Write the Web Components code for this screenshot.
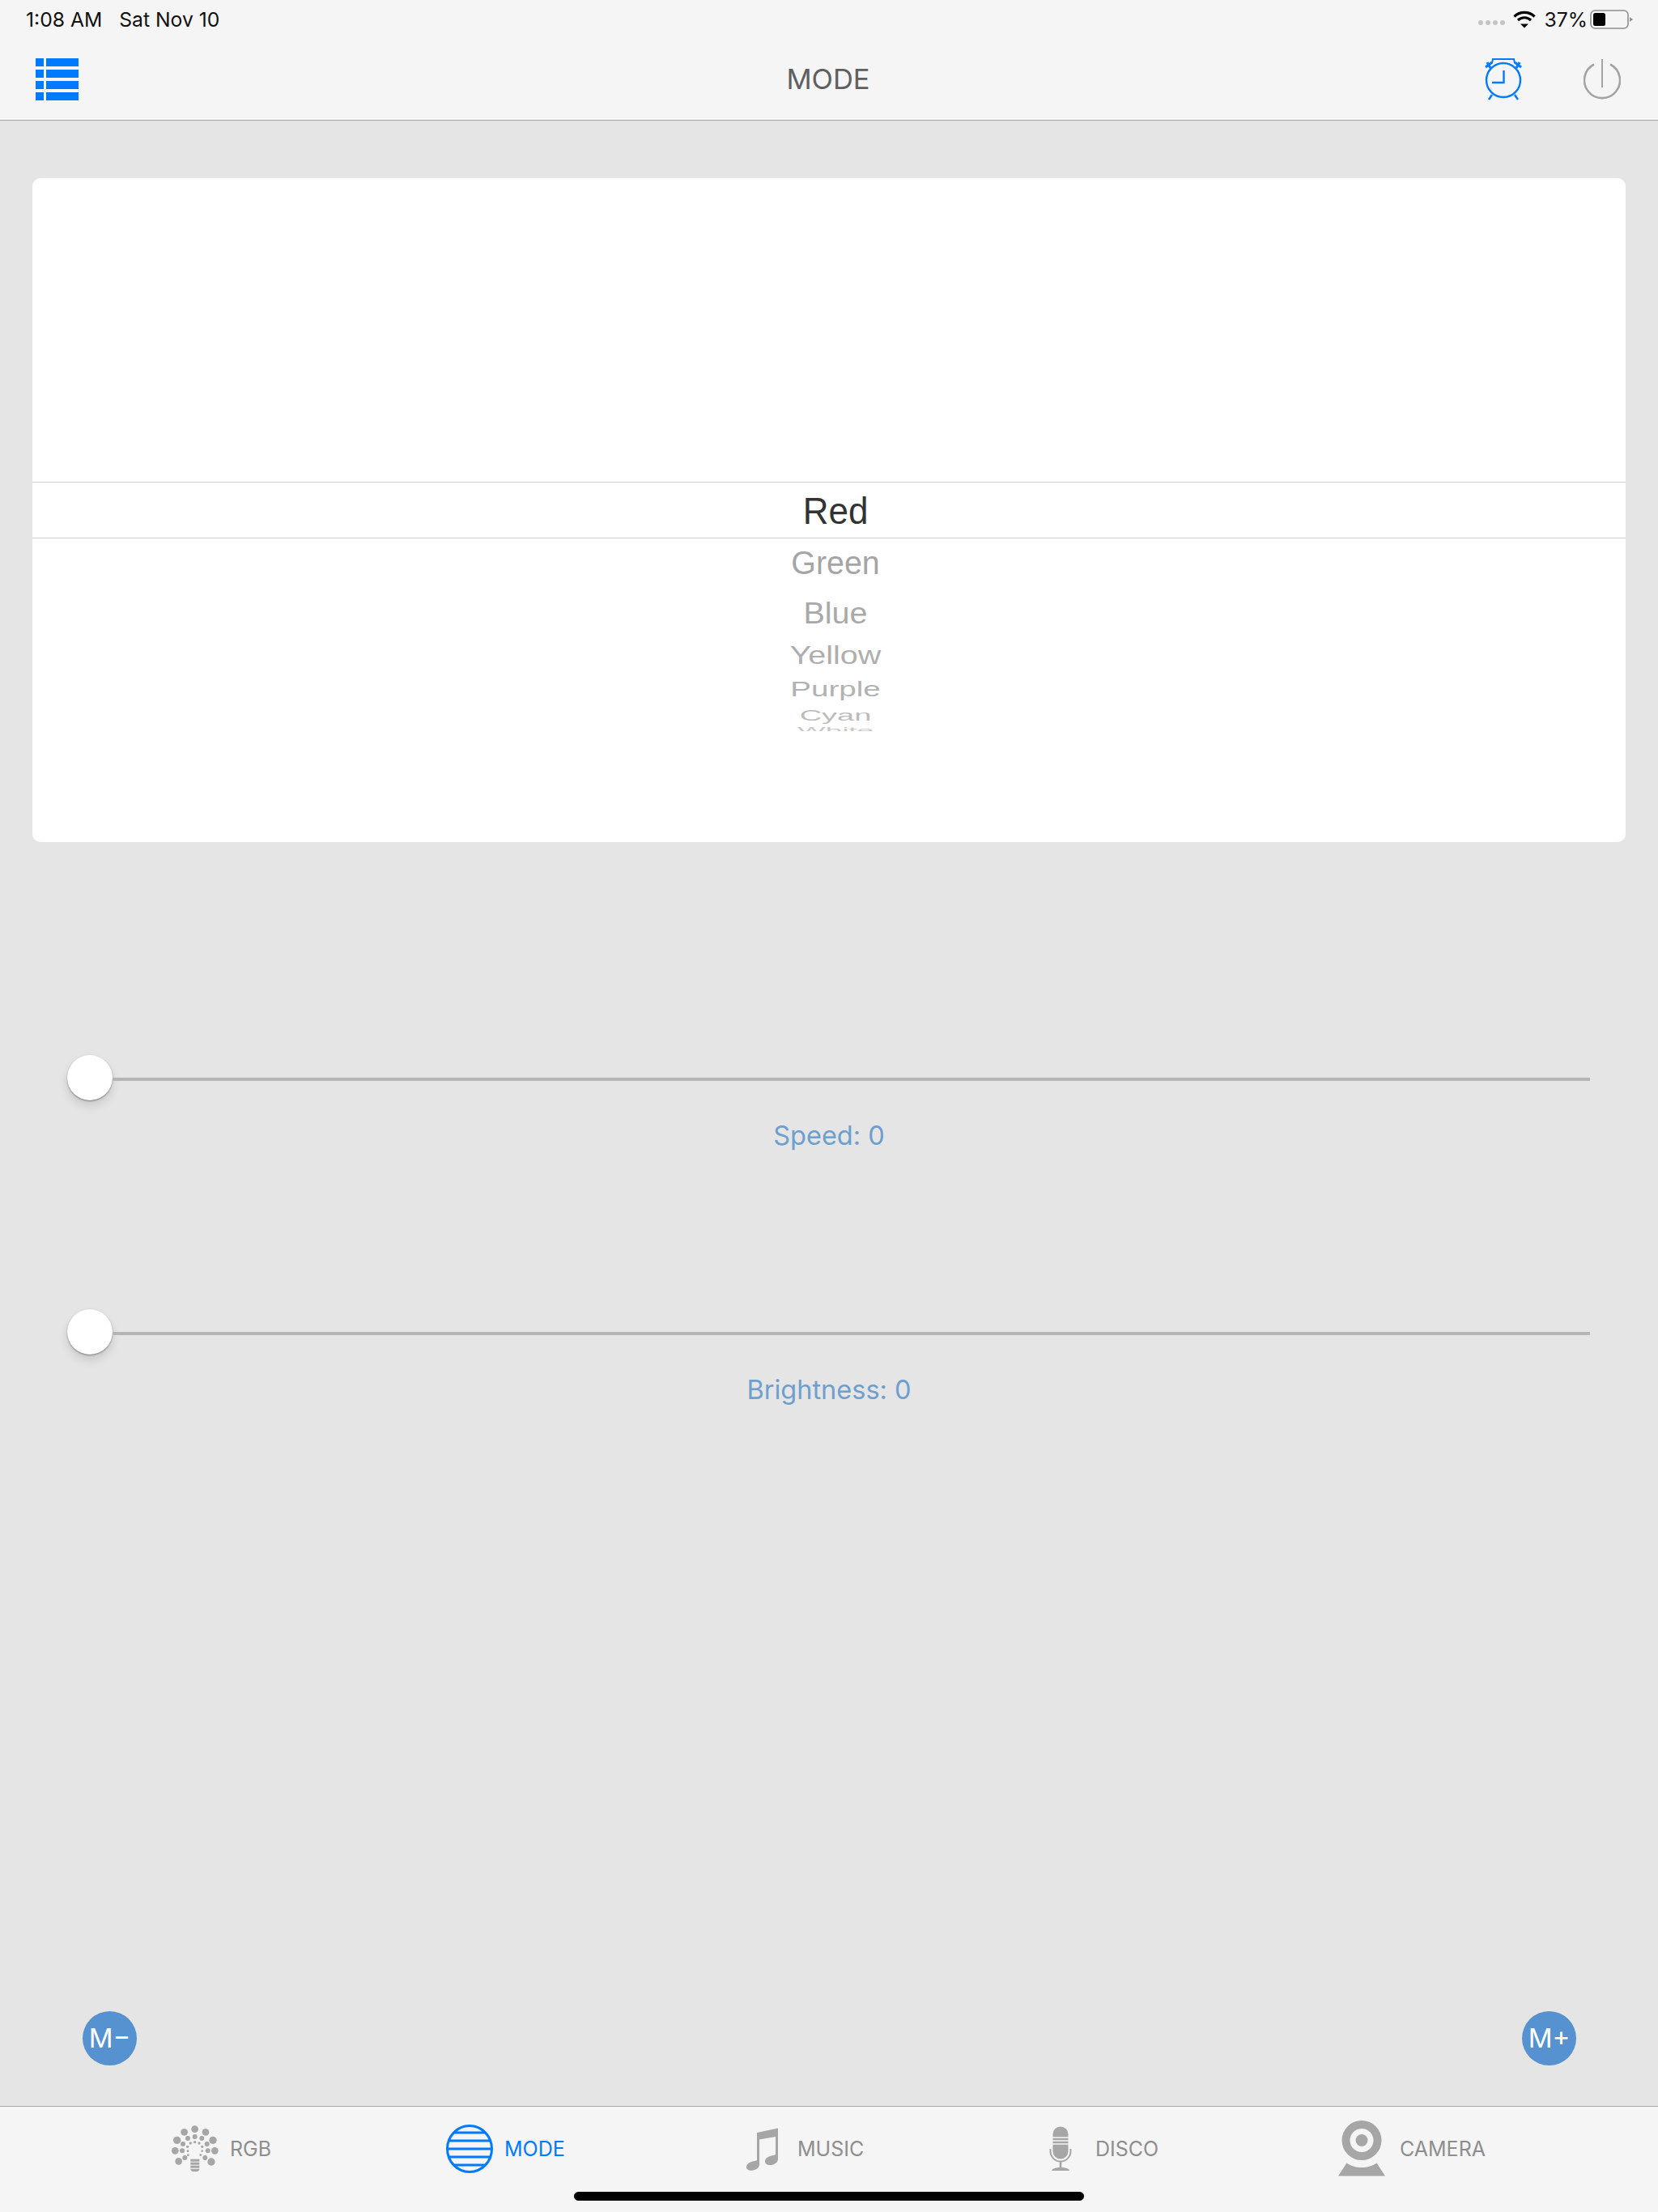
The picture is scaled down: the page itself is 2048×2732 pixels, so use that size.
<!DOCTYPE html>
<html>
<head>
<meta charset="utf-8">
<title>MODE</title>
<style>
  html, body { margin: 0; padding: 0; background: #e5e5e5; }
  body { font-family: "Inter", "Liberation Sans", sans-serif; }
</style>
</head>
<body>
<app-screen>
  <status-bar slot="top"></status-bar>
  <nav-bar slot="top" title="MODE"></nav-bar>

  <picker-wheel></picker-wheel>
  <value-slider label="Speed: 0" style="margin-top:263px"></value-slider>
  <value-slider label="Brightness: 0" style="margin-top:194px"></value-slider>
  <memory-buttons></memory-buttons>

  <tab-bar slot="bottom">
    <tab-item label="RGB">
      <svg slot="icon" width="60" height="60" viewBox="60 40 180 180" fill="#a6a6a6" style="margin-right:14px">
        <circle cx="152" cy="57" r="13"/><circle cx="113" cy="68" r="13"/><circle cx="192" cy="68" r="13"/>
        <circle cx="86" cy="98" r="14"/><circle cx="219" cy="98" r="14"/><circle cx="79" cy="137" r="13"/>
        <circle cx="226" cy="137" r="13"/><circle cx="92" cy="176" r="13"/><circle cx="213" cy="178" r="14"/>
        <circle cx="152" cy="85" r="9"/><circle cx="126" cy="91" r="9"/><circle cx="178" cy="91" r="9"/>
        <circle cx="108" cy="112" r="9"/><circle cx="197" cy="112" r="9"/><circle cx="105" cy="137" r="9"/>
        <circle cx="200" cy="137" r="9"/><circle cx="115" cy="163" r="9"/><circle cx="190" cy="163" r="9"/>
        <circle cx="152" cy="105" r="5"/><circle cx="136" cy="109" r="5"/><circle cx="168" cy="109" r="5"/>
        <circle cx="125" cy="122" r="5"/><circle cx="179" cy="122" r="5"/><circle cx="126" cy="138" r="4"/>
        <circle cx="179" cy="138" r="4"/><circle cx="127" cy="153" r="4"/><circle cx="173" cy="153" r="4"/>
        <rect x="136" y="168" width="33" height="9"/><rect x="136" y="180" width="33" height="9"/>
        <rect x="136" y="192" width="33" height="9"/><path d="M136 204h33v3l-6 7h-21l-6-7z"/>
      </svg>
    </tab-item>
    <tab-item label="MODE" active>
      <svg slot="icon" width="58" height="60" viewBox="0 0 58 60" fill="none" stroke="#007aff" style="margin-right:14px">
        <ellipse cx="29" cy="30" rx="27.500" ry="28.500" stroke-width="3"/>
        <path d="M9.400 10h39.200M3.300 20h51.400M1.500 30h55M3.300 40h51.400M9.400 50h39.200" stroke-width="3"/>
      </svg>
    </tab-item>
    <tab-item label="MUSIC">
      <svg slot="icon" width="42" height="54" viewBox="0 0 42 54" fill="#a6a6a6" style="margin-right:22px">
        <path d="M14 7 40 1.500V39c0 4-2.500 6.500-7 7.800-4.500 1-9-.5-9-4.300 0-3.500 3-5.800 7-6.800 2.500-.6 5-.8 6-1.700V12L17 15.500V46c0 4-3 6.500-7.500 7.600C5 54.500 1 53 1 49.500c0-3.500 3-5.800 7-6.800 2.500-.6 5-.8 6-1.700z"/>
      </svg>
    </tab-item>
    <tab-item label="DISCO">
      <svg slot="icon" width="28" height="56" viewBox="0 0 28 56" fill="#a6a6a6" style="margin-right:29px">
        <path d="M4.500 10a9.500 9.500 0 0 1 19 0v21a9.500 9.500 0 0 1-19 0z"/>
        <path d="M2 13h24M2 17h24M2 21h24" stroke="#f5f5f5" stroke-width="1.400" transform="translate(0 1)"/>
        <path d="M1.500 28v3a12.500 12.500 0 0 0 25 0v-3" fill="none" stroke="#a6a6a6" stroke-width="2"/>
        <rect x="12.700" y="43" width="2.600" height="9"/>
        <path d="M3 55c1-3 5-4 11-4s10 1 11 4z"/>
      </svg>
    </tab-item>
    <tab-item label="CAMERA">
      <svg slot="icon" width="60" height="70" viewBox="0 0 60 70" fill="#a6a6a6" style="margin-right:17px">
        <path fill-rule="evenodd" d="M30 0a24.500 24.500 0 1 1 0 49a24.500 24.500 0 1 1 0-49zM30 10a14.500 14.500 0 1 0 0 29a14.500 14.500 0 1 0 0-29z"/>
        <circle cx="30" cy="24.500" r="7.500"/>
        <path d="M11.500 52.500C16 56 23 58 30 58s14-2 18.500-5.500L59 68.500H1z"/>
      </svg>
    </tab-item>
  </tab-bar>
</app-screen>

<script>
// outer frame, header on top, tab bar on the bottom, content between
class AppScreen extends HTMLElement {
  constructor() {
    super();
    this.shadow = this.attachShadow({ mode: "open" });
    this.shadow.innerHTML = `
      <style>
        :host { display: flex; flex-direction: column; width: 2048px; height: 2732px; overflow: hidden; background: #e5e5e5; }
        header { background: #f5f5f5; border-bottom: 1px solid #a9a9a9; }
        main { flex: 1; display: flex; flex-direction: column; padding: 71px 40px 50px; min-height: 0; }
      </style>
      <header><slot name="top"></slot></header>
      <main><slot></slot></main>
      <slot name="bottom"></slot>
    `;
  }
}

class StatusBar extends HTMLElement {
  constructor() {
    super();
    this.shadow = this.attachShadow({ mode: "open" });
    this.shadow.innerHTML = `
      <style>
        :host { display: flex; align-items: center; height: 48px; padding: 0 30px 0 32px; font: 24.700px/48px "Inter", "Liberation Sans", sans-serif; color: #111; }
        .date { margin-left: 21px; }
        .right { margin-left: auto; display: flex; align-items: center; }
        .dots { display: flex; gap: 3px; margin-top: 8px; }
        .dots i { width: 6px; height: 6px; border-radius: 50%; background: #c4c4c4; }
        .wifi { margin: 0 11px 0 10px; }
        .pct { margin-right: 3px; }
      </style>
      <span>1:08 AM</span><span class="date">Sat Nov 10</span>
      <div class="right">
        <div class="dots"><i></i><i></i><i></i><i></i></div>
        <svg class="wifi" width="28" height="22" viewBox="0 0 28 22" fill="none" stroke="#000" stroke-width="3.200">
          <path d="M1.500 7.500a18 18 0 0 1 25 0M6 12a11.500 11.500 0 0 1 16 0"/>
          <path d="M9 16.500h10L14 21.500z" fill="#000" stroke="none"/>
        </svg>
        <span class="pct">37%</span>
        <svg width="54" height="24" viewBox="0 0 54 24">
          <rect x="1" y="1" width="46" height="22" rx="5" fill="none" stroke="#8e8e8e" stroke-width="1.600"/>
          <rect x="4" y="4" width="15" height="16" rx="2.500" fill="#000"/>
          <path d="M49 9l4 3-4 3z" fill="#8e8e8e"/>
        </svg>
      </div>
    `;
  }
}

class NavBar extends HTMLElement {
  constructor() {
    super();
    this.shadow = this.attachShadow({ mode: "open" });
    this.shadow.innerHTML = `
      <style>
        :host { display: grid; grid-template-columns: 1fr auto 1fr; align-items: center; height: 100px; padding: 0 46px 0 44px; }
        .title { font: 34.500px/1 "Inter", "Liberation Sans", sans-serif; color: #5f5f5f; }
        .actions { justify-self: end; display: flex; gap: 75px; align-items: center; }
        svg { display: block; }
      </style>
      <svg width="54" height="52" viewBox="0 0 54 52" fill="#007aff">
        <path d="M0 0h10v10H0zM13 0h40v10H13zM0 14h10v10H0zM13 14h40v10H13zM0 28h10v10H0zM13 28h40v10H13zM0 42h10v10H0zM13 42h40v10H13z"/>
      </svg>
      <div class="title"></div>
      <div class="actions">
        <svg width="48" height="54" viewBox="0 0 48 54" fill="none" stroke="#007aff" stroke-width="2.400">
          <circle cx="24" cy="28" r="21"/>
          <path d="M24.500 16v15H10"/>
          <path d="M10 7 11 2h26l1 5" stroke-width="2"/>
          <path d="M2 12 10 6M4 6l4 7M46 12 38 6M44 6l-4 7" stroke-width="3"/>
          <path d="M10 46 6 52M38 46 42 52"/>
        </svg>
        <svg width="46" height="50" viewBox="0 0 46 50" fill="none" stroke="#a3a3a3" stroke-width="2.600">
          <path d="M13 6.500a22 22 0 1 0 20 0"/>
          <path d="M23 0v35" stroke-width="2"/>
        </svg>
      </div>
    `;
    this.shadow.querySelector(".title").textContent = this.getAttribute("title");
  }
}

const WHEEL_ITEMS = [
  // name, font size, vertical squash, box height, colour
  ["Green", 39.4, 1.02, 61, "#a5a5a5"],
  ["Blue", 39.5, 0.93, 62, "#a9a9a9"],
  ["Yellow", 39.5, 0.78, 43, "#aeaeae"],
  ["Purple", 38.6, 0.65, 42, "#b2b2b2"],
  ["Cyan", 38, 0.48, 22, "#bcbcbc"],
  ["White", 36.8, 0.3, 14, "#c8c8c8"],
];

class PickerWheel extends HTMLElement {
  constructor() {
    super();
    this.shadow = this.attachShadow({ mode: "open" });
    const rows = WHEEL_ITEMS.map(([name, size, squash, height, color]) =>
      `<div class="item" style="height:${height}px;line-height:${height}px;font-size:${size}px;color:${color}">
         <span style="transform:scaleY(${squash})">${name}</span>
       </div>`
    ).join("");
    this.shadow.innerHTML = `
      <style>
        :host { display: block; height: 820px; padding-top: 375px; box-sizing: border-box; background: #fff; border-radius: 10px; font-family: "Liberation Sans", Arial, sans-serif; }
        .selected { height: 68px; line-height: 68px; border-top: 1px solid #cfcfcf; border-bottom: 1px solid #cfcfcf; text-align: center; font-size: 44px; color: #333; padding-left: 16px; }
        .selected span { display: inline-block; transform: translateY(1px) scaleY(1.05); }
        .rest { height: 238px; overflow: hidden; padding-left: 16px; }
        .item { text-align: center; }
        .item span { display: inline-block; }
      </style>
      <div class="selected"><span>Red</span></div>
      <div class="rest">${rows}</div>
    `;
  }
}

class ValueSlider extends HTMLElement {
  constructor() {
    super();
    this.shadow = this.attachShadow({ mode: "open" });
    this.shadow.innerHTML = `
      <style>
        :host { display: block; }
        .row { display: flex; align-items: center; margin: 0 44px 0 43px; }
        .thumb { width: 56px; height: 56px; border-radius: 50%; background: #fff; flex: none; box-shadow: 0 1px 2px rgba(0,0,0,.4), 0 7px 12px rgba(0,0,0,.12); }
        .track { flex: 1; height: 4px; margin-top: 4px; background: #b5b5b5; }
        .label { margin: 24px -40px 0; text-align: center; font: 32.500px/40px "Inter", "Liberation Sans", sans-serif; color: #6f9fce; }
      </style>
      <div class="row"><div class="thumb"></div><div class="track"></div></div>
      <div class="label"></div>
    `;
    this.shadow.querySelector(".label").textContent = this.getAttribute("label");
  }
}

class MemoryButtons extends HTMLElement {
  constructor() {
    super();
    this.shadow = this.attachShadow({ mode: "open" });
    this.shadow.innerHTML = `
      <style>
        :host { display: flex; justify-content: space-between; margin-top: auto; padding: 0 61px 0 62px; }
        button { width: 67px; height: 67px; padding: 0; border: 0; border-radius: 50%; background: #5592cf; color: #fff; font: 33px/67px "Inter", "Liberation Sans", sans-serif; }
      </style>
      <button>M−</button>
      <button>M+</button>
    `;
  }
}

class TabBar extends HTMLElement {
  constructor() {
    super();
    this.shadow = this.attachShadow({ mode: "open" });
    this.shadow.innerHTML = `
      <style>
        :host { display: block; height: 131px; background: #f5f5f5; border-top: 1px solid #a9a9a9; box-sizing: border-box; }
        .tabs { display: grid; grid-template-columns: 341px 370px 375px 356px 1fr; align-items: center; height: 104px; padding-left: 210px; }
        .home { width: 630px; height: 11px; margin: 1px auto 0; border-radius: 6px; background: #000; }
      </style>
      <div class="tabs"><slot></slot></div>
      <div class="home"></div>
    `;
  }
}

class TabItem extends HTMLElement {
  constructor() {
    super();
    this.shadow = this.attachShadow({ mode: "open" });
    this.shadow.innerHTML = `
      <style>
        :host { display: flex; align-items: center; font: 25px/1 "Inter", "Liberation Sans", sans-serif; color: #8e8e8e; }
        :host([active]) { color: #007aff; }
      </style>
      <slot name="icon"></slot><span></span>
    `;
    this.shadow.querySelector("span").textContent = this.getAttribute("label");
  }
}

customElements.define("app-screen", AppScreen);
customElements.define("status-bar", StatusBar);
customElements.define("nav-bar", NavBar);
customElements.define("picker-wheel", PickerWheel);
customElements.define("value-slider", ValueSlider);
customElements.define("memory-buttons", MemoryButtons);
customElements.define("tab-bar", TabBar);
customElements.define("tab-item", TabItem);
</script>
</body>
</html>
